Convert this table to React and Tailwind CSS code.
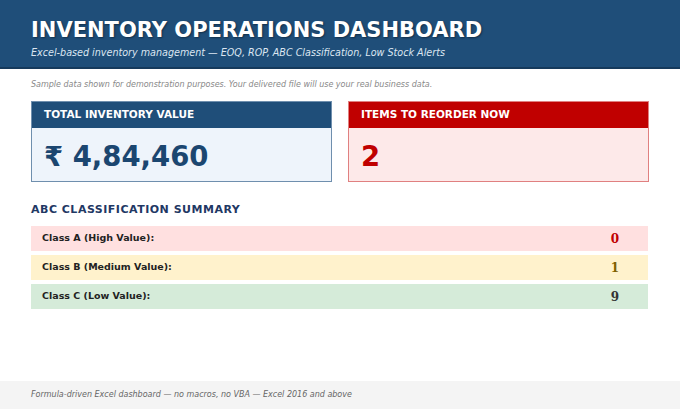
import React from 'react';

const classes = [
  { label: 'Class A (High Value):', value: 0, row: 'bg-[#ffe0e0]', num: 'text-[#c00000]' },
  { label: 'Class B (Medium Value):', value: 1, row: 'bg-[#fff2cc]', num: 'text-[#7f6000]' },
  { label: 'Class C (Low Value):', value: 9, row: 'bg-[#d5ebd9]', num: 'text-[#333333]' },
];

function App() {
  return (
    <div className="w-[680px] h-[409px] bg-white flex flex-col font-['DejaVu_Sans',sans-serif] overflow-hidden">
      {/* Header */}
      <div className="h-[69px] bg-[#1f4e79] border-b-2 border-[#163a5c] px-[31px] pt-[18px]">
        <h1 className="text-[21px] leading-[25px] font-bold text-white [text-shadow:1px_1px_2px_rgba(0,0,0,0.4)]">
          INVENTORY OPERATIONS DASHBOARD
        </h1>
        <p className="mt-[3px] text-[9.6px] leading-[13px] italic text-[#dce6f1]">
          Excel-based inventory management — EOQ, ROP, ABC Classification, Low Stock Alerts
        </p>
      </div>

      <div className="flex-1 px-[31px]">
        <p className="mt-[11px] text-[8px] leading-[10px] italic text-[#888888]">
          Sample data shown for demonstration purposes. Your delivered file will use your real business data.
        </p>

        {/* KPI cards */}
        <div className="mt-[11px] flex gap-[16px]">
          <div className="w-[301px] h-[81px] border border-[#6f8fae] flex flex-col">
            <div className="h-[26px] bg-[#1f4e79] px-[12px] flex items-center text-[10.5px] font-bold text-white">
              TOTAL INVENTORY VALUE
            </div>
            <div className="flex-1 bg-[#eef4fb] px-[12px] pt-[4px] flex items-center text-[27.5px] font-bold text-[#1b4670]">
              ₹ 4,84,460
            </div>
          </div>
          <div className="w-[301px] h-[81px] border border-[#e08080] flex flex-col">
            <div className="h-[26px] bg-[#c00000] px-[12px] flex items-center text-[10.5px] font-bold text-white">
              ITEMS TO REORDER NOW
            </div>
            <div className="flex-1 bg-[#fde9e9] px-[12px] pt-[4px] flex items-center text-[27.5px] font-bold text-[#c00000]">
              2
            </div>
          </div>
        </div>

        {/* ABC summary */}
        <h2 className="mt-[21px] text-[11px] leading-[14px] font-bold tracking-[0.5px] text-[#1f3864]">
          ABC CLASSIFICATION SUMMARY
        </h2>
        <div className="mt-[9px] w-[617px] flex flex-col gap-[4px]">
          {classes.map((c) => (
            <div key={c.label} className={`h-[25px] ${c.row} flex items-center justify-between pl-[11px] pr-[29px]`}>
              <span className="text-[9.5px] font-bold text-[#222222]">{c.label}</span>
              <span className={`text-[12px] font-bold font-['DejaVu_Serif',serif] ${c.num}`}>{c.value}</span>
            </div>
          ))}
        </div>
      </div>

      {/* Footer */}
      <div className="h-[28px] bg-[#f4f4f4] px-[31px] flex items-center">
        <p className="text-[8px] italic text-[#666666]">
          Formula-driven Excel dashboard — no macros, no VBA — Excel 2016 and above
        </p>
      </div>
    </div>
  );
}

export default App;
